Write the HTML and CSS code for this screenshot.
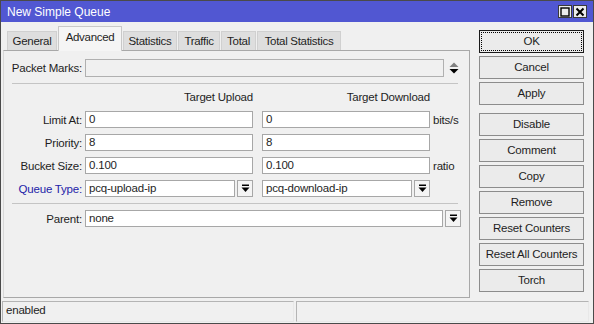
FILE: index.html
```html
<!DOCTYPE html>
<html lang="en">
<head>
    <meta charset="UTF-8">
    <title>New Simple Queue</title>
    <link rel="stylesheet" href="styles.css">
</head>
<body>
    <div class="window">
        <!-- title bar -->
        <div class="titlebar">
            <span class="title">New Simple Queue</span>
            <div class="title-buttons">
                <div class="tbtn">
                    <svg width="10" height="10" viewBox="0 0 10 10"><rect x="1" y="1" width="8" height="8" fill="none" stroke="#000" stroke-width="1.4"/></svg>
                </div>
                <div class="tbtn">
                    <svg width="10" height="10" viewBox="0 0 10 10"><path d="M1.5 1.5 L8.5 8.5 M8.5 1.5 L1.5 8.5" stroke="#000" stroke-width="2"/></svg>
                </div>
            </div>
        </div>

        <div class="main">
            <div class="left">
                <!-- tabs -->
                <div class="tabs">
                    <div class="tab tab-general">General</div>
                    <div class="tab tab-advanced active">Advanced</div>
                    <div class="tab tab-stats">Statistics</div>
                    <div class="tab tab-traffic">Traffic</div>
                    <div class="tab tab-total">Total</div>
                    <div class="tab tab-totalstats">Total Statistics</div>
                </div>

                <div class="panel">
                    <div class="row packet-row">
                        <label class="lbl">Packet Marks:</label>
                        <div class="field field-wide disabled"></div>
                        <svg class="updown" width="10" height="13" viewBox="0 0 10 13">
                            <polygon points="0.5,5 9.5,5 5,0.5" fill="#808080"/>
                            <polygon points="0.5,7 9.5,7 5,11.5" fill="#000"/>
                        </svg>
                    </div>

                    <div class="sep sep-top"></div>

                    <div class="heads">
                        <div class="head">Target Upload</div>
                        <div class="head">Target Download</div>
                    </div>

                    <div class="row">
                        <label class="lbl">Limit At:</label>
                        <div class="field col">0</div>
                        <div class="field col">0</div>
                        <span class="unit">bits/s</span>
                    </div>
                    <div class="row">
                        <label class="lbl">Priority:</label>
                        <div class="field col">8</div>
                        <div class="field col">8</div>
                    </div>
                    <div class="row">
                        <label class="lbl">Bucket Size:</label>
                        <div class="field col">0.100</div>
                        <div class="field col">0.100</div>
                        <span class="unit">ratio</span>
                    </div>
                    <div class="row">
                        <label class="lbl link">Queue Type:</label>
                        <div class="combo col">
                            <div class="field">pcq-upload-ip</div>
                            <div class="drop"><svg width="9" height="9" viewBox="0 0 9 9"><rect x="1" y="0.5" width="7" height="1.5" fill="#000"/><polygon points="0.5,3.5 8.5,3.5 4.5,8" fill="#000"/></svg></div>
                        </div>
                        <div class="combo col">
                            <div class="field">pcq-download-ip</div>
                            <div class="drop"><svg width="9" height="9" viewBox="0 0 9 9"><rect x="1" y="0.5" width="7" height="1.5" fill="#000"/><polygon points="0.5,3.5 8.5,3.5 4.5,8" fill="#000"/></svg></div>
                        </div>
                    </div>

                    <div class="sep sep-mid"></div>

                    <div class="row">
                        <label class="lbl">Parent:</label>
                        <div class="combo combo-wide">
                            <div class="field">none</div>
                            <div class="drop"><svg width="9" height="9" viewBox="0 0 9 9"><rect x="1" y="0.5" width="7" height="1.5" fill="#000"/><polygon points="0.5,3.5 8.5,3.5 4.5,8" fill="#000"/></svg></div>
                        </div>
                    </div>
                </div>
            </div>

            <!-- action buttons -->
            <div class="actions">
                <div class="btn btn-ok">OK</div>
                <div class="btn">Cancel</div>
                <div class="btn">Apply</div>
                <div class="btn btn-group">Disable</div>
                <div class="btn">Comment</div>
                <div class="btn">Copy</div>
                <div class="btn">Remove</div>
                <div class="btn">Reset Counters</div>
                <div class="btn">Reset All Counters</div>
                <div class="btn">Torch</div>
            </div>
        </div>

        <!-- status bar -->
        <div class="statusbar">
            <div class="status-cell">enabled</div>
            <div class="status-cell"></div>
        </div>
    </div>
</body>
</html>
```

FILE: styles.css
```css
/* base */
* {
    box-sizing: border-box;
    margin: 0;
    padding: 0;
}

body {
    font-family: "Liberation Sans", Arial, sans-serif;
    font-size: 11px;
    letter-spacing: -0.2px;
    color: #1e1e1e;
    background: #f0f0f0;
}

.window {
    width: 594px;
    height: 324px;
    border: 1px solid #4a4a4a;
    background: #f0f0f0;
    display: flex;
    flex-direction: column;
}

/* title bar */
.titlebar {
    height: 21px;
    background: #5157d2;
    color: #fff;
    display: flex;
    align-items: center;
    justify-content: space-between;
    padding: 0 6px 0 6px;
    font-size: 12px;
    letter-spacing: 0;
}

.title-buttons {
    display: flex;
    gap: 1px;
}

.tbtn {
    width: 14px;
    height: 13px;
    background: #ececec;
    border: 1px solid #3a3a3a;
    display: flex;
    align-items: center;
    justify-content: center;
}

/* main area */
.main {
    display: flex;
    height: 278px;
    padding: 4px 0 0 2px;
}

.left {
    width: 467px;
    display: flex;
    flex-direction: column;
}

/* tabs */
.tabs {
    display: flex;
    align-items: flex-end;
    height: 24px;
    padding-left: 4px;
    gap: 1px;
}

.tab {
    height: 19px;
    line-height: 18px;
    text-align: center;
    background: #dedede;
    border: 1px solid #d0d0d0;
    border-bottom: none;
    white-space: nowrap;
    font-size: 11.5px;
    letter-spacing: -0.3px;
}

.tab-general { width: 50px; }
.tab-advanced { width: 64px; }
.tab-stats { width: 54px; }
.tab-traffic { width: 42px; }
.tab-total { width: 35px; }
.tab-totalstats { width: 84px; }

.tab.active {
    height: 25px;
    line-height: 21px;
    background: #f5f5f5;
    border-color: #c8c8c8;
    margin-bottom: -1px;
    position: relative;
    z-index: 1;
}

.panel {
    height: 248px;
    border: 1px solid #a8a8a8;
    border-left-color: #d8d8d8;
    padding-top: 8px;
}

/* rows */
.row {
    display: flex;
    align-items: center;
    height: 17px;
    margin-bottom: 6px;
}

.lbl {
    width: 78px;
    margin-right: 3px;
    text-align: right;
    white-space: nowrap;
    font-size: 11.5px;
}

.lbl.link {
    color: #2323a8;
}

.field {
    height: 17px;
    line-height: 15px;
    background: #fff;
    border: 1px solid #a7a7a7;
    padding-left: 3px;
    white-space: nowrap;
    font-size: 11.5px;
}

.field.disabled {
    background: #f0f0f0;
    border-color: #b0b0b0;
}

.packet-row {
    height: 18px;
}

.packet-row .field {
    height: 18px;
}

.field-wide {
    width: 359px;
}

.updown {
    margin-left: 5px;
}

.col {
    width: 168px;
    margin-right: 9px;
}

.row .col:last-of-type {
    margin-right: 3px;
}

.unit {
    white-space: nowrap;
    font-size: 11.5px;
}

.combo {
    display: flex;
    gap: 2px;
}

.combo .field {
    flex: 1;
}

.combo-wide {
    width: 376px;
}

.drop {
    width: 16px;
    height: 17px;
    border: 1px solid #a7a7a7;
    background: #f4f4f4;
    display: flex;
    align-items: center;
    justify-content: center;
}

/* separators */
.sep {
    height: 1px;
    background: #c4c4c4;
    margin-left: 8px;
    width: 446px;
}

.sep-top {
    margin-top: 6px;
}

.sep-mid {
    margin-top: 3px;
    margin-bottom: 6px;
}

.heads {
    display: flex;
    height: 14px;
    line-height: 14px;
    margin: 6px 0 7px 81px;
    font-size: 11.5px;
}

.head {
    width: 168px;
    text-align: right;
    margin-right: 9px;
}

/* buttons column */
.actions {
    width: 105px;
    margin-left: 9px;
    padding-top: 4px;
    display: flex;
    flex-direction: column;
    gap: 3px;
}

.btn {
    height: 23px;
    line-height: 21px;
    text-align: center;
    background: #ebebeb;
    border: 1px solid #8c8c8c;
    font-size: 11.5px;
    white-space: nowrap;
}

.btn-ok {
    border-color: #1a1a1a;
    outline: 1px dotted #000;
    outline-offset: -3px;
}

.btn-group {
    margin-top: 5px;
}

/* status bar */
.statusbar {
    display: flex;
    height: 21px;
    margin-top: 1px;
    padding: 0 2px 0 1px;
    gap: 2px;
}

.status-cell {
    width: 292px;
    border: 1px solid #b4b4b4;
    border-right-color: #e8e8e8;
    border-bottom-color: #e8e8e8;
    padding-left: 3px;
    line-height: 16px;
    font-size: 11.5px;
}

.status-cell + .status-cell {
    width: 293px;
}
```
